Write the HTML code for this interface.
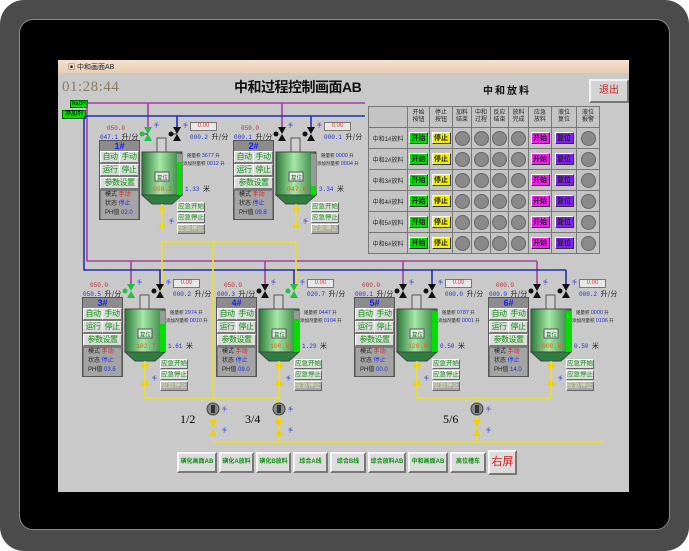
<!DOCTYPE html>
<html><head><meta charset="utf-8"><style>
*{margin:0;padding:0;box-sizing:border-box}
body{width:689px;height:551px;background:#fff;position:relative;overflow:hidden;font-family:"Liberation Sans","Noto Sans CJK SC",sans-serif}
.a{position:absolute}
#outer{left:0;top:0;width:689px;height:551px;background:#4b4b4b;border-radius:24px}
#bez{left:19px;top:19px;width:651px;height:511px;background:#000;border-radius:14px;border:1px solid #8a8a8a}
#scr{left:58px;top:60px;width:571px;height:432px;background:#c9c9c9;overflow:hidden}
#tb{left:0;top:0;width:571px;height:13px;background:linear-gradient(#f4e2cf,#e8cdb2);font-size:7px;color:#222;padding:2px 0 0 10px}
.g{position:absolute;width:1px;height:1px}
.pn{position:absolute;left:0;top:0;width:41px;height:80px;background:#7a7a7a;border:1px solid #555}
.ph{position:absolute;left:0;top:0;width:39px;height:10px;background:#8c8c8c;color:#1a1aff;font-weight:bold;font-size:9px;text-align:center;line-height:10px}
.b{position:absolute;width:20px;height:12px;background:#dcdcdc;border:1px solid #fff;border-right-color:#777;border-bottom-color:#777;color:#109010;font-size:8px;line-height:10px;text-align:center;white-space:nowrap;overflow:hidden;letter-spacing:-0.5px}
.w{width:39px}
.st{position:absolute;left:1px;top:50px;width:37px;height:28px;background:#a4a4a4;font-size:6px;line-height:9px;color:#222;padding-left:4px;white-space:nowrap}
.r{color:#e02020}.bl{color:#2030e0}
.sp{position:absolute;font-size:6px;color:#c03030;font-family:"Liberation Mono",monospace}
.fl{position:absolute;font-size:6px;color:#2030d0;font-family:"Liberation Mono",monospace;white-space:nowrap}
.fl i{font-style:normal;color:#222;font-family:"Noto Sans CJK SC",sans-serif;font-size:7px}
.bx{position:absolute;width:27px;height:9px;background:#e8e8e8;border:1px solid #777;color:#e03030;font-size:6px;text-align:center;line-height:7px}
.sm{position:absolute;font-size:4.5px;color:#222;white-space:nowrap}
.sm b{font-weight:normal;color:#2030d0;font-size:5.5px}
.eb{position:absolute;width:28px;height:10px;background:#dcdcdc;border:1px solid #fff;border-right-color:#666;border-bottom-color:#666;color:#109010;font-size:6.5px;line-height:8px;text-align:center;white-space:nowrap;overflow:hidden}
.eb.d{background:#a8a8a8;color:#e8e8b0}
.sh{position:absolute;color:#2030e0;font-size:5px}
svg{position:absolute;overflow:visible}
table{border-collapse:collapse}
#tbl{left:310px;top:46px}
#tbl td{border:1px solid #777;background:#c4c4c4;padding:0;text-align:center;font-size:6px;height:21px;color:#222;white-space:nowrap}
.cb{display:inline-block;width:19px;height:12px;font-size:7px;line-height:11px;border:1px solid #333;border-top-color:#fff;border-left-color:#fff;font-weight:bold}
.ci{display:inline-block;width:15px;height:15px;border-radius:50%;background:#8a8a8a;border:1px solid #666;vertical-align:middle}
.fb{position:absolute;top:392px;height:21px;background:#dcdcdc;border:2px solid #f4f4f4;border-right-color:#777;border-bottom-color:#777;color:#109010;font-size:6px;font-weight:bold;text-align:center;line-height:17px;white-space:nowrap;overflow:hidden}
</style></head><body>
<div id="outer" class="a"></div>
<div id="bez" class="a"></div>
<div id="scr" class="a">
<div id="tb" class="a">▣ 中和画面AB</div>
<div class="a" style="left:4px;top:19px;font-family:'Liberation Serif',serif;font-size:15px;color:#8a7a5a;letter-spacing:0.5px">01:28:44</div>
<div class="a" style="left:176px;top:17px;font-size:14px;font-weight:bold;color:#111;letter-spacing:-0.5px">中和过程控制画面AB</div>
<div class="a" style="left:425px;top:22px;font-size:10px;font-weight:bold;color:#111;letter-spacing:2px">中和放料</div>
<div class="a" style="left:531px;top:19px;width:40px;height:24px;background:#d4d4d4;border:2px solid #f2f2f2;border-right-color:#777;border-bottom-color:#777;color:#d02020;font-size:10px;text-align:center;line-height:20px">退出</div>
<div class="a" style="left:12px;top:40px;width:18px;height:8px;background:#00e000;border:1px solid #060;font-size:5px;line-height:6px;text-align:center">NaOH</div>
<div class="a" style="left:4px;top:50px;width:24px;height:9px;background:#00e000;border:1px solid #060;font-size:6px;line-height:7px;text-align:center">添加剂</div>

<svg width="571" height="432" style="left:0;top:0">
<g fill="none" stroke-width="1.6">
<path stroke="#a040a0" d="M30,43H307M90,43V67M224,43V67M29,43V201H479M73,201V224M207,201V224M345,201V224M479,201V224"/>
<path stroke="#2030b0" d="M28,56H307M119,56V67M253,56V67M26,56V210H508M102,210V224M236,210V224M374,210V224M508,210V224"/>
<path stroke="#f0e020" d="M104,229V182H238V229M155,182V338M87,326V338H221V326M359,326V338H493V326M155,382H545M221,338V382M419,338V382M87,326V320M221,326V320"/>
</g>
<g>
<circle cx="155" cy="349" r="6" fill="#888" stroke="#444"/><rect x="153" y="345" width="4" height="8" fill="#333"/>
<circle cx="221" cy="349" r="6" fill="#888" stroke="#444"/><rect x="219" y="345" width="4" height="8" fill="#333"/>
<circle cx="419" cy="349" r="6" fill="#888" stroke="#444"/><rect x="417" y="345" width="4" height="8" fill="#333"/>
<path fill="#f0d000" d="M151,360h8l-4,7zM151,376h8l-4,-7zM217,360h8l-4,7zM217,376h8l-4,-7zM415,360h8l-4,7zM415,376h8l-4,-7z"/>
</g>
<text x="122" y="363" font-family="Liberation Serif" font-size="12">1/2</text>
<text x="187" y="363" font-family="Liberation Serif" font-size="12">3/4</text>
<text x="385" y="363" font-family="Liberation Serif" font-size="12">5/6</text>
<text x="164" y="351" fill="#2030e0" font-size="5">手</text><text x="230" y="351" fill="#2030e0" font-size="5">手</text><text x="428" y="351" fill="#2030e0" font-size="5">手</text>
<text x="164" y="372" fill="#2030e0" font-size="5">手</text><text x="230" y="372" fill="#2030e0" font-size="5">手</text><text x="428" y="372" fill="#2030e0" font-size="5">手</text>
</svg>

<div class="g" style="left:41px;top:80px">
<div class="sp" style="left:8px;top:-15px">050.0</div><div class="fl" style="left:1px;top:-8px">047.1 <i>升/分</i></div>
<div class="bx" style="left:91px;top:-18px">0.00</div><div class="fl" style="left:91px;top:-8px">000.2 <i>升/分</i></div>
<div class="pn"><div class="ph">1#</div><div class="b" style="left:0;top:10px">自动</div><div class="b" style="left:19px;top:10px">手动</div><div class="b" style="left:0;top:23px">运行</div><div class="b" style="left:19px;top:23px">停止</div><div class="b w" style="left:0;top:36px">参数设置</div><div class="st">模式 <span class="r">手动</span><br>状态 <span class="bl">停止</span><br>PH值 <span class="bl">02.0</span></div></div>
<svg width="1" height="1" style="left:0;top:0"><defs><linearGradient id="tg" x1="0" x2="1"><stop offset="0" stop-color="#2d7a3a"/><stop offset=".45" stop-color="#a6e8a6"/><stop offset="1" stop-color="#2d7a3a"/></linearGradient></defs>
<path fill="#20c040" d="M45,-13h8l-4,7zM45,1h8l-4,-7z"/><path d="M49,-6H44" stroke="#333"/><circle cx="43" cy="-6" r="2.5" fill="#20c040"/>
<path fill="#111" d="M74,-13h8l-4,7zM74,1h8l-4,-7z"/><path d="M78,-6H73" stroke="#333"/><circle cx="72" cy="-6" r="2.5" fill="#111"/>
<rect x="58" y="-2" width="9" height="14" fill="#cfcfcf" stroke="#555"/>
<rect x="43" y="12" width="40" height="43" fill="url(#tg)" stroke="#444"/><path d="M43,55H83L73,64H53Z" fill="#2f8040" stroke="#444"/>
<rect x="78" y="14" width="5" height="41" fill="#999"/><rect x="78" y="22" width="5" height="33" fill="#00e000"/>
<rect x="56" y="32" width="14" height="9" fill="#e8e8e8" stroke="#555"/><text x="58" y="39.5" font-size="5.5" fill="#070">复位</text>
<text x="54" y="51" font-size="6.5" fill="#e06010" font-family="Liberation Mono">098.2</text>
<path fill="#f0d000" d="M59,67h8l-4,7zM59,88h8l-4,-7z"/><path d="M63,64V90" stroke="#f0e020" stroke-width="1.5"/>
</svg>
<div class="sm" style="left:88px;top:13px">随量积 <b>3677</b> 升</div><div class="sm" style="left:84px;top:21px">添加剂量积 <b>0012</b> 升</div>
<div class="fl" style="left:86px;top:44px">1.33 <i>米</i></div>
<div class="sh" style="left:55px;top:-18px">手</div><div class="sh" style="left:84px;top:-18px">手</div><div class="sh" style="left:70px;top:78px">手</div>
<div class="eb" style="left:78px;top:62px">应急开始</div><div class="eb" style="left:78px;top:73px">应急停止</div><div class="eb d" style="left:78px;top:84px">应急停止</div>
</div>

<div class="g" style="left:175px;top:80px">
<div class="sp" style="left:8px;top:-15px">050.0</div><div class="fl" style="left:1px;top:-8px">000.1 <i>升/分</i></div>
<div class="bx" style="left:91px;top:-18px">0.00</div><div class="fl" style="left:91px;top:-8px">000.1 <i>升/分</i></div>
<div class="pn"><div class="ph">2#</div><div class="b" style="left:0;top:10px">自动</div><div class="b" style="left:19px;top:10px">手动</div><div class="b" style="left:0;top:23px">运行</div><div class="b" style="left:19px;top:23px">停止</div><div class="b w" style="left:0;top:36px">参数设置</div><div class="st">模式 <span class="r">手动</span><br>状态 <span class="bl">停止</span><br>PH值 <span class="bl">09.8</span></div></div>
<svg width="1" height="1" style="left:0;top:0">
<path fill="#111" d="M45,-13h8l-4,7zM45,1h8l-4,-7zM74,-13h8l-4,7zM74,1h8l-4,-7z"/><circle cx="43" cy="-6" r="2.5" fill="#111"/><circle cx="72" cy="-6" r="2.5" fill="#111"/>
<rect x="58" y="-2" width="9" height="14" fill="#cfcfcf" stroke="#555"/>
<rect x="43" y="12" width="40" height="43" fill="url(#tg)" stroke="#444"/><path d="M43,55H83L73,64H53Z" fill="#2f8040" stroke="#444"/>
<rect x="78" y="14" width="5" height="41" fill="#999"/><rect x="78" y="46" width="5" height="9" fill="#00e000"/>
<rect x="56" y="32" width="14" height="9" fill="#e8e8e8" stroke="#555"/><text x="58" y="39.5" font-size="5.5" fill="#070">复位</text>
<text x="54" y="51" font-size="6.5" fill="#e06010" font-family="Liberation Mono">047.6</text>
<path fill="#f0d000" d="M59,67h8l-4,7zM59,88h8l-4,-7z"/><path d="M63,64V90" stroke="#f0e020" stroke-width="1.5"/>
</svg>
<div class="sm" style="left:88px;top:13px">随量积 <b>0000</b> 升</div><div class="sm" style="left:84px;top:21px">添加剂量积 <b>0004</b> 升</div>
<div class="fl" style="left:86px;top:44px">3.34 <i>米</i></div>
<div class="sh" style="left:55px;top:-18px">手</div><div class="sh" style="left:84px;top:-18px">手</div><div class="sh" style="left:70px;top:78px">手</div>
<div class="eb" style="left:78px;top:62px">应急开始</div><div class="eb" style="left:78px;top:73px">应急停止</div><div class="eb d" style="left:78px;top:84px">应急停止</div>
</div>

<div class="g" style="left:24px;top:237px">
<div class="sp" style="left:8px;top:-15px">050.0</div><div class="fl" style="left:1px;top:-8px">050.5 <i>升/分</i></div>
<div class="bx" style="left:91px;top:-18px">0.00</div><div class="fl" style="left:91px;top:-8px">000.2 <i>升/分</i></div>
<div class="pn"><div class="ph">3#</div><div class="b" style="left:0;top:10px">自动</div><div class="b" style="left:19px;top:10px">手动</div><div class="b" style="left:0;top:23px">运行</div><div class="b" style="left:19px;top:23px">停止</div><div class="b w" style="left:0;top:36px">参数设置</div><div class="st">模式 <span class="r">手动</span><br>状态 <span class="bl">停止</span><br>PH值 <span class="bl">03.6</span></div></div>
<svg width="1" height="1" style="left:0;top:0">
<path fill="#20c040" d="M45,-13h8l-4,7zM45,1h8l-4,-7z"/><circle cx="43" cy="-6" r="2.5" fill="#20c040"/>
<path fill="#111" d="M74,-13h8l-4,7zM74,1h8l-4,-7z"/><circle cx="72" cy="-6" r="2.5" fill="#111"/>
<rect x="58" y="-2" width="9" height="14" fill="#cfcfcf" stroke="#555"/>
<rect x="43" y="12" width="40" height="43" fill="url(#tg)" stroke="#444"/><path d="M43,55H83L73,64H53Z" fill="#2f8040" stroke="#444"/>
<rect x="78" y="14" width="5" height="41" fill="#999"/><rect x="78" y="27" width="5" height="28" fill="#00e000"/>
<rect x="56" y="32" width="14" height="9" fill="#e8e8e8" stroke="#555"/><text x="58" y="39.5" font-size="5.5" fill="#070">复位</text>
<text x="54" y="51" font-size="6.5" fill="#e06010" font-family="Liberation Mono">102.7</text>
<path fill="#f0d000" d="M59,67h8l-4,7zM59,88h8l-4,-7z"/><path d="M63,64V90" stroke="#f0e020" stroke-width="1.5"/>
</svg>
<div class="sm" style="left:88px;top:13px">随量积 <b>2974</b> 升</div><div class="sm" style="left:84px;top:21px">添加剂量积 <b>0010</b> 升</div>
<div class="fl" style="left:86px;top:44px">1.61 <i>米</i></div>
<div class="sh" style="left:55px;top:-18px">手</div><div class="sh" style="left:84px;top:-18px">手</div><div class="sh" style="left:70px;top:78px">手</div>
<div class="eb" style="left:78px;top:62px">应急开始</div><div class="eb" style="left:78px;top:73px">应急停止</div><div class="eb d" style="left:78px;top:84px">应急停止</div>
</div>

<div class="g" style="left:158px;top:237px">
<div class="sp" style="left:8px;top:-15px">050.0</div><div class="fl" style="left:1px;top:-8px">000.3 <i>升/分</i></div>
<div class="bx" style="left:91px;top:-18px">0.00</div><div class="fl" style="left:91px;top:-8px">020.7 <i>升/分</i></div>
<div class="pn"><div class="ph">4#</div><div class="b" style="left:0;top:10px">自动</div><div class="b" style="left:19px;top:10px">手动</div><div class="b" style="left:0;top:23px">运行</div><div class="b" style="left:19px;top:23px">停止</div><div class="b w" style="left:0;top:36px">参数设置</div><div class="st">模式 <span class="r">手动</span><br>状态 <span class="bl">停止</span><br>PH值 <span class="bl">09.0</span></div></div>
<svg width="1" height="1" style="left:0;top:0">
<path fill="#111" d="M45,-13h8l-4,7zM45,1h8l-4,-7z"/><circle cx="43" cy="-6" r="2.5" fill="#111"/>
<path fill="#20c040" d="M74,-13h8l-4,7zM74,1h8l-4,-7z"/><circle cx="72" cy="-6" r="2.5" fill="#20c040"/>
<rect x="58" y="-2" width="9" height="14" fill="#cfcfcf" stroke="#555"/>
<rect x="43" y="12" width="40" height="43" fill="url(#tg)" stroke="#444"/><path d="M43,55H83L73,64H53Z" fill="#2f8040" stroke="#444"/>
<rect x="78" y="14" width="5" height="41" fill="#999"/><rect x="78" y="22" width="5" height="33" fill="#00e000"/>
<rect x="56" y="32" width="14" height="9" fill="#e8e8e8" stroke="#555"/><text x="58" y="39.5" font-size="5.5" fill="#070">复位</text>
<text x="54" y="51" font-size="6.5" fill="#e06010" font-family="Liberation Mono">100.0</text>
<path fill="#f0d000" d="M59,67h8l-4,7zM59,88h8l-4,-7z"/><path d="M63,64V90" stroke="#f0e020" stroke-width="1.5"/>
</svg>
<div class="sm" style="left:88px;top:13px">随量积 <b>0447</b> 升</div><div class="sm" style="left:84px;top:21px">添加剂量积 <b>0104</b> 升</div>
<div class="fl" style="left:86px;top:44px">1.29 <i>米</i></div>
<div class="sh" style="left:55px;top:-18px">手</div><div class="sh" style="left:84px;top:-18px">手</div><div class="sh" style="left:70px;top:78px">手</div>
<div class="eb" style="left:78px;top:62px">应急开始</div><div class="eb" style="left:78px;top:73px">应急停止</div><div class="eb d" style="left:78px;top:84px">应急停止</div>
</div>

<div class="g" style="left:296px;top:237px">
<div class="sp" style="left:8px;top:-15px">000.0</div><div class="fl" style="left:1px;top:-8px">000.1 <i>升/分</i></div>
<div class="bx" style="left:91px;top:-18px">0.00</div><div class="fl" style="left:91px;top:-8px">000.0 <i>升/分</i></div>
<div class="pn"><div class="ph">5#</div><div class="b" style="left:0;top:10px">自动</div><div class="b" style="left:19px;top:10px">手动</div><div class="b" style="left:0;top:23px">运行</div><div class="b" style="left:19px;top:23px">停止</div><div class="b w" style="left:0;top:36px">参数设置</div><div class="st">模式 <span class="r">手动</span><br>状态 <span class="bl">停止</span><br>PH值 <span class="bl">00.0</span></div></div>
<svg width="1" height="1" style="left:0;top:0">
<path fill="#111" d="M45,-13h8l-4,7zM45,1h8l-4,-7zM74,-13h8l-4,7zM74,1h8l-4,-7z"/><circle cx="43" cy="-6" r="2.5" fill="#111"/><circle cx="72" cy="-6" r="2.5" fill="#111"/>
<rect x="58" y="-2" width="9" height="14" fill="#cfcfcf" stroke="#555"/>
<rect x="43" y="12" width="40" height="43" fill="url(#tg)" stroke="#444"/><path d="M43,55H83L73,64H53Z" fill="#2f8040" stroke="#444"/>
<rect x="78" y="14" width="5" height="41" fill="#00e000"/>
<rect x="56" y="32" width="14" height="9" fill="#e8e8e8" stroke="#555"/><text x="58" y="39.5" font-size="5.5" fill="#070">复位</text>
<text x="54" y="51" font-size="6.5" fill="#e06010" font-family="Liberation Mono">120.0</text>
<path fill="#f0d000" d="M59,67h8l-4,7zM59,88h8l-4,-7z"/><path d="M63,64V90" stroke="#f0e020" stroke-width="1.5"/>
</svg>
<div class="sm" style="left:88px;top:13px">随量积 <b>0787</b> 升</div><div class="sm" style="left:84px;top:21px">添加剂量积 <b>0001</b> 升</div>
<div class="fl" style="left:86px;top:44px">0.50 <i>米</i></div>
<div class="sh" style="left:55px;top:-18px">手</div><div class="sh" style="left:84px;top:-18px">手</div><div class="sh" style="left:70px;top:78px">手</div>
<div class="eb" style="left:78px;top:62px">应急开始</div><div class="eb" style="left:78px;top:73px">应急停止</div><div class="eb d" style="left:78px;top:84px">应急停止</div>
</div>

<div class="g" style="left:430px;top:237px">
<div class="sp" style="left:8px;top:-15px">000.0</div><div class="fl" style="left:1px;top:-8px">000.0 <i>升/分</i></div>
<div class="bx" style="left:91px;top:-18px">0.00</div><div class="fl" style="left:91px;top:-8px">000.2 <i>升/分</i></div>
<div class="pn"><div class="ph">6#</div><div class="b" style="left:0;top:10px">自动</div><div class="b" style="left:19px;top:10px">手动</div><div class="b" style="left:0;top:23px">运行</div><div class="b" style="left:19px;top:23px">停止</div><div class="b w" style="left:0;top:36px">参数设置</div><div class="st">模式 <span class="r">手动</span><br>状态 <span class="bl">停止</span><br>PH值 <span class="bl">14.0</span></div></div>
<svg width="1" height="1" style="left:0;top:0">
<path fill="#111" d="M45,-13h8l-4,7zM45,1h8l-4,-7zM74,-13h8l-4,7zM74,1h8l-4,-7z"/><circle cx="43" cy="-6" r="2.5" fill="#111"/><circle cx="72" cy="-6" r="2.5" fill="#111"/>
<rect x="58" y="-2" width="9" height="14" fill="#cfcfcf" stroke="#555"/>
<rect x="43" y="12" width="40" height="43" fill="url(#tg)" stroke="#444"/><path d="M43,55H83L73,64H53Z" fill="#2f8040" stroke="#444"/>
<rect x="78" y="14" width="5" height="41" fill="#00e000"/>
<rect x="56" y="32" width="14" height="9" fill="#e8e8e8" stroke="#555"/><text x="58" y="39.5" font-size="5.5" fill="#070">复位</text>
<text x="54" y="51" font-size="6.5" fill="#e06010" font-family="Liberation Mono">000.0</text>
<path fill="#f0d000" d="M59,67h8l-4,7zM59,88h8l-4,-7z"/><path d="M63,64V90" stroke="#f0e020" stroke-width="1.5"/>
</svg>
<div class="sm" style="left:88px;top:13px">随量积 <b>0000</b> 升</div><div class="sm" style="left:84px;top:21px">添加剂量积 <b>0106</b> 升</div>
<div class="fl" style="left:86px;top:44px">0.50 <i>米</i></div>
<div class="sh" style="left:55px;top:-18px">手</div><div class="sh" style="left:84px;top:-18px">手</div><div class="sh" style="left:70px;top:78px">手</div>
<div class="eb" style="left:78px;top:62px">应急开始</div><div class="eb" style="left:78px;top:73px">应急停止</div><div class="eb d" style="left:78px;top:84px">应急停止</div>
</div>

<table id="tbl" class="a">
<tr style="line-height:7px"><td style="width:39px"></td><td style="width:22px">开始<br>按钮</td><td style="width:23px">停止<br>按钮</td><td style="width:19px">加料<br>结束</td><td style="width:19px">中和<br>过程</td><td style="width:18px">反应<br>结束</td><td style="width:20px">放料<br>完成</td><td style="width:23px">应急<br>放料</td><td style="width:25px">液位<br>复位</td><td style="width:23px">液位<br>报警</td></tr>
<tr><td>中和1#放料</td><td><span class="cb" style="background:#00e000">开始</span></td><td><span class="cb" style="background:#f0f000">停止</span></td><td><span class="ci"></span></td><td><span class="ci"></span></td><td><span class="ci"></span></td><td><span class="ci"></span></td><td><span class="cb" style="background:#f020f0">开始</span></td><td><span class="cb" style="background:#8020f0">复位</span></td><td><span class="ci"></span></td></tr>
<tr><td>中和2#放料</td><td><span class="cb" style="background:#00e000">开始</span></td><td><span class="cb" style="background:#f0f000">停止</span></td><td><span class="ci"></span></td><td><span class="ci"></span></td><td><span class="ci"></span></td><td><span class="ci"></span></td><td><span class="cb" style="background:#f020f0">开始</span></td><td><span class="cb" style="background:#8020f0">复位</span></td><td><span class="ci"></span></td></tr>
<tr><td>中和3#放料</td><td><span class="cb" style="background:#00e000">开始</span></td><td><span class="cb" style="background:#f0f000">停止</span></td><td><span class="ci"></span></td><td><span class="ci"></span></td><td><span class="ci"></span></td><td><span class="ci"></span></td><td><span class="cb" style="background:#f020f0">开始</span></td><td><span class="cb" style="background:#8020f0">复位</span></td><td><span class="ci"></span></td></tr>
<tr><td>中和4#放料</td><td><span class="cb" style="background:#00e000">开始</span></td><td><span class="cb" style="background:#f0f000">停止</span></td><td><span class="ci"></span></td><td><span class="ci"></span></td><td><span class="ci"></span></td><td><span class="ci"></span></td><td><span class="cb" style="background:#f020f0">开始</span></td><td><span class="cb" style="background:#8020f0">复位</span></td><td><span class="ci"></span></td></tr>
<tr><td>中和5#放料</td><td><span class="cb" style="background:#00e000">开始</span></td><td><span class="cb" style="background:#f0f000">停止</span></td><td><span class="ci"></span></td><td><span class="ci"></span></td><td><span class="ci"></span></td><td><span class="ci"></span></td><td><span class="cb" style="background:#f020f0">开始</span></td><td><span class="cb" style="background:#8020f0">复位</span></td><td><span class="ci"></span></td></tr>
<tr><td>中和6#放料</td><td><span class="cb" style="background:#00e000">开始</span></td><td><span class="cb" style="background:#f0f000">停止</span></td><td><span class="ci"></span></td><td><span class="ci"></span></td><td><span class="ci"></span></td><td><span class="ci"></span></td><td><span class="cb" style="background:#f020f0">开始</span></td><td><span class="cb" style="background:#8020f0">复位</span></td><td><span class="ci"></span></td></tr>
</table>

<div class="fb" style="left:119px;width:40px">磺化画面AB</div>
<div class="fb" style="left:161px;width:35px">磺化A放料</div>
<div class="fb" style="left:198px;width:35px">磺化B放料</div>
<div class="fb" style="left:235px;width:35px">综合A线</div>
<div class="fb" style="left:272px;width:36px">综合B线</div>
<div class="fb" style="left:310px;width:38px">综合放料AB</div>
<div class="fb" style="left:350px;width:40px">中和画面AB</div>
<div class="fb" style="left:392px;width:36px">高位槽车</div>
<div class="fb" style="left:430px;top:390px;width:29px;height:25px;color:#d02020;font-size:11px;font-weight:normal;line-height:21px">右屏</div>
</div>
</body></html>
